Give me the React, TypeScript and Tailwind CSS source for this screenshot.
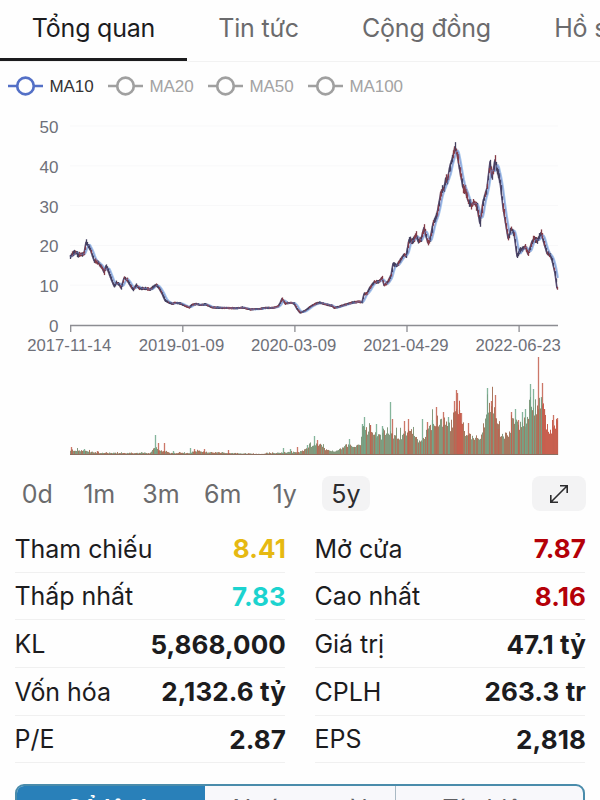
const tabs = [
  { label: "Tổng quan", width: "w-[187px]" },
  { label: "Tin tức", width: "w-[143px]" },
  { label: "Cộng đồng", width: "w-[193px]" },
  { label: "Hồ sơ", width: "w-[130px]" },
]

const legend = ["MA10", "MA20", "MA50", "MA100"]

const ranges = ["0d", "1m", "3m", "6m", "1y", "5y"]

const stats = [
  [
    { label: "Tham chiếu", value: "8.41", color: "text-[#e6b912]" },
    { label: "Thấp nhất", value: "7.83", color: "text-[#1cd3cf]" },
    { label: "KL", value: "5,868,000", color: "text-[#1c1c1e]" },
    { label: "Vốn hóa", value: "2,132.6 tỷ", color: "text-[#1c1c1e]" },
    { label: "P/E", value: "2.87", color: "text-[#1c1c1e]" },
  ],
  [
    { label: "Mở cửa", value: "7.87", color: "text-[#b40008]" },
    { label: "Cao nhất", value: "8.16", color: "text-[#b40008]" },
    { label: "Giá trị", value: "47.1 tỷ", color: "text-[#1c1c1e]" },
    { label: "CPLH", value: "263.3 tr", color: "text-[#1c1c1e]" },
    { label: "EPS", value: "2,818", color: "text-[#1c1c1e]" },
  ],
]

// [x, price]
const prices: number[][] = [
  [70, 17.2], [73, 18], [75, 18.4], [78, 17.7], [81, 17.8], [84, 18], [86, 20.8], [89, 19.5], [91, 18.5], [94, 16.2],
  [98, 15.6], [102, 14.4], [104, 13.2], [106, 14.9], [109, 13], [112, 11], [114, 9.8], [116, 10.6], [119, 10.2], [121, 9.3],
  [124, 11.8], [127, 11.3], [130, 10], [133, 8.9], [136, 10], [139, 9.2], [143, 9.2], [150, 8.9], [153, 9.6], [156, 10.1],
  [159, 9.2], [162, 7.9], [165, 6.2], [168, 5.7], [172, 5.3], [175, 5.6], [180, 5.4], [185, 4.8], [189, 4.4], [192, 5.1],
  [196, 5.3], [200, 5], [205, 5.2], [212, 4.4], [225, 4.3], [235, 4.2], [242, 4.4], [250, 3.9], [258, 4], [265, 4.3],
  [273, 4.3], [278, 4.7], [280, 5.5], [282, 6.6], [285, 5.4], [290, 5.6], [294, 5.4], [297, 4], [300, 3.1], [305, 3.6],
  [310, 4.6], [315, 5.3], [319, 5.6], [325, 5.2], [332, 4.8], [334, 4.3], [340, 4.7], [350, 5.5], [358, 5.9], [362, 5.7],
  [364, 7.8], [367, 8], [370, 9.5], [374, 10.8], [379, 11], [382, 11.9], [384, 10], [388, 11], [391, 12.5], [393, 15.4],
  [396, 14.8], [400, 16.3], [404, 17.7], [406, 17.3], [409, 21.4], [412, 20.9], [416, 22.8], [418, 21], [421, 21.6],
  [424, 24.5], [426, 22.2], [428, 20.6], [430, 21.6], [433, 25.5], [437, 28], [441, 33.5], [444, 34.5], [446, 37], [447, 36],
  [450, 40], [453, 42.5], [455, 44.8], [457, 43], [460, 38.5], [463, 34.5], [465, 34], [468, 31.2], [471, 30], [474, 31],
  [477, 29.5], [480, 25.5], [483, 31], [487, 34.5], [490, 41], [492, 37], [495, 41.5], [497, 39], [500, 36], [503, 29.5],
  [505, 26.5], [508, 21.8], [511, 24.2], [514, 23], [517, 17.3], [520, 18.8], [525, 19.8], [528, 17.8], [532, 21], [534, 21.8],
  [537, 21], [541, 23.2], [544, 20.5], [547, 18], [550, 17.5], [552, 16.3], [555, 13], [557, 9.2], [558, 8],
]

// [x, height] of the typical daily volume
const volumeBase: number[][] = [
  [70, 5], [85, 4], [100, 2], [150, 2], [153, 7], [160, 5], [170, 2], [190, 2], [194, 4], [205, 3], [260, 1], [272, 2],
  [300, 3], [311, 9], [320, 11], [326, 5], [336, 4], [348, 10], [360, 9], [362, 26], [380, 19], [390, 22], [398, 18],
  [408, 23], [420, 13], [430, 28], [440, 36], [450, 28], [456, 46], [462, 34], [466, 19], [480, 18], [485, 34], [490, 52],
  [495, 45], [500, 20], [508, 20], [512, 34], [518, 30], [525, 34], [530, 52], [536, 46], [541, 58], [546, 28], [550, 24], [558, 34],
]

// [x, height, rising]
const volumePeaks: number[][] = [
  [71, 8, 0], [84, 6, 1], [97, 4, 0], [155, 20, 1], [158, 12, 0], [164, 12, 0], [173, 4, 1], [190, 7, 1], [194, 6, 0],
  [204, 6, 0], [228, 5, 0], [283, 7, 1], [290, 6, 1], [297, 8, 0], [307, 10, 1], [314, 19, 1], [317, 15, 0], [349, 16, 1],
  [362, 31, 1], [364, 38, 1], [370, 30, 0], [376, 31, 1], [382, 29, 1], [390, 53, 1], [392, 36, 0], [404, 34, 0], [408, 36, 0],
  [422, 36, 1], [427, 33, 0], [432, 35, 1], [436, 48, 0], [443, 43, 0], [448, 38, 1], [454, 54, 0], [456, 65, 0], [457, 62, 0],
  [459, 45, 0], [461, 42, 0], [468, 32, 0], [487, 67, 1], [491, 54, 0], [495, 60, 0], [498, 26, 0], [511, 43, 0], [515, 46, 1],
  [518, 35, 0], [522, 43, 1], [525, 46, 1], [530, 71, 1], [533, 66, 1], [538, 98, 0], [541, 58, 1], [542, 72, 0], [544, 46, 0],
  [553, 40, 0], [557, 37, 0],
]

const axisY = 325
const volumeY = 455
const unit = 3.98

function lerp(points: number[][], x: number) {
  for (let i = 1; i < points.length; i++) {
    if (x <= points[i][0]) {
      const [x0, y0] = points[i - 1]
      const [x1, y1] = points[i]
      return y0 + ((x - x0) / (x1 - x0)) * (y1 - y0)
    }
  }
  return points[points.length - 1][1]
}

function noise(n: number) {
  const v = Math.sin(n * 12.9898 + 4.1) * 43758.5453
  return v - Math.floor(v)
}

const candles = Array.from({ length: 488 }, (_, i) => {
  const x = 70 + i
  const price = lerp(prices, x)
  const spread = 0.7 + Math.min(price, 34) * 0.09 * (0.4 + noise(i))
  const y = axisY - price * unit + (noise(i + 900) - 0.5) * price * 0.08
  return { x, top: y - spread, bottom: y + spread, up: noise(i + 300) > 0.5 }
})

const priceLine = candles.map(({ x }) => `${x},${(axisY - lerp(prices, x) * unit).toFixed(1)}`).join(" ")

const ma10 = candles
  .map(({ x }) => {
    const avg = [0, 1, 2, 3].reduce((sum, d) => sum + lerp(prices, Math.max(70, x - d)), 0) / 4
    return `${x},${(axisY - avg * unit).toFixed(1)}`
  })
  .join(" ")

const volumes = Array.from({ length: 488 }, (_, i) => {
  const x = 70 + i
  // single sessions stand out above the usual level
  const burst = noise(i + 210) > 0.85 ? 1.35 : 1
  return { x, h: Math.max(1, lerp(volumeBase, x) * (0.8 + noise(i + 50) * 0.35) * burst), up: noise(i + 77) > 0.5 }
})

function volumeColor(x: number, up: boolean) {
  if ((x > 456 && x < 463) || x > 541) return "#c9604f"
  return up ? "#83997d" : "#a8775f"
}

function Chart() {
  return (
    <svg width="600" height="362" viewBox="0 106 600 362" className="block font-['Liberation_Sans',sans-serif]">
      {[0, 10, 20, 30, 40, 50].map((v) => (
        <g key={v}>
          {v > 0 && <path d={`M70 ${axisY - v * unit}H558`} stroke="#f8f8f9" />}
          <text x="58.5" y={axisY - v * unit + 7} textAnchor="end" fontSize="17" fill="#6e7079">
            {v}
          </text>
        </g>
      ))}
      <path d="M70 325.5H558" stroke="#8c8d92" strokeWidth="1.3" />
      {["2017-11-14", "2019-01-09", "2020-03-09", "2021-04-29", "2022-06-23"].map((d, i) => (
        <g key={d}>
          <path d={`M${70.7 + i * 112.1} 325V332`} stroke="#8c8d92" strokeWidth="1.3" />
          <text x={69.3 + i * 112.2} y="351" textAnchor="middle" fontSize="16.7" fill="#6e7079">
            {d}
          </text>
        </g>
      ))}

      {/* Price */}
      <polyline points={ma10} fill="none" stroke="#a3c3ea" strokeWidth="2" strokeLinejoin="round" transform="translate(1 0)" />
      <polyline points={priceLine} fill="none" stroke="#55496f" strokeWidth="1.6" strokeLinejoin="round" />
      {candles.map((c) => (
        <path key={c.x} d={`M${c.x + 0.5} ${c.top}V${c.bottom}`} stroke={c.up ? "#44405f" : "#843c48"} strokeWidth="1.3" />
      ))}
      <polyline points={ma10} fill="none" stroke="#7888cc" strokeWidth="1" strokeLinejoin="round" opacity="0.65" transform="translate(0.5 0)" />

      {/* Volume */}
      {volumes.map((v) => (
        <path key={v.x} d={`M${v.x + 0.5} ${volumeY}V${volumeY - v.h}`} stroke={volumeColor(v.x, v.up)} />
      ))}
      {volumePeaks.map(([x, h, up]) => (
        <path key={x} d={`M${x + 0.5} ${volumeY}V${volumeY - h}`} stroke={up ? "#6fa98a" : "#c4604f"} strokeWidth="1.3" opacity="0.85" />
      ))}
      <path d="M70 454.5H558" stroke="#8b6e60" />
    </svg>
  )
}

export default function App() {
  return (
    <div className="w-[600px] h-[800px] overflow-hidden bg-[#fefefe] font-['Inter',sans-serif] text-[#1c1c1e]">
      {/* Tabs */}
      <div className="flex h-[62px] border-b border-[#f2f2f2]">
        {tabs.map((tab, i) => (
          <div
            key={tab.label}
            className={`h-[61px] shrink-0 pt-2 flex justify-center text-[25px] leading-10 tracking-[-0.2px] whitespace-nowrap ${tab.width} ${
              i === 0 ? "border-b-[3px] border-[#1c1c1e]" : "text-[#6b6b6d]"
            }`}
          >
            {tab.label}
          </div>
        ))}
      </div>

      {/* Moving averages */}
      <div className="flex h-11 pl-[7.5px] pt-3 font-['Liberation_Sans',sans-serif] text-[17px] leading-6">
        {legend.map((name, i) => (
          <div key={name} className={`w-[100px] shrink-0 flex gap-[7px] ${i === 0 ? "text-[#333333]" : "text-[#a3a3a3]"}`}>
            <svg width="35" height="24" viewBox="0 0 35 24" fill="none" stroke={i === 0 ? "#5470c6" : "#a0a0a0"} strokeWidth="2.7">
              <path d="M0 12H9M26 12H35" />
              <circle cx="17.5" cy="12" r="8.3" />
            </svg>
            <span className="pt-px tracking-[-0.1px]">{name}</span>
          </div>
        ))}
      </div>

      <Chart />

      {/* Time range */}
      <div className="flex justify-between pl-[6px] pr-[14px] pt-2">
        <div className="grid grid-cols-[repeat(6,61.8px)] text-[25px] leading-[36px] text-[#6b6b6d]">
          {ranges.map((range) => (
            <div key={range} className="flex h-[35px] justify-center">
              <span className={range === "5y" ? "w-12 rounded-lg bg-[#f3f3f4] text-center text-[#2c2c2e]" : "pl-px"}>{range}</span>
            </div>
          ))}
        </div>
        <div className="w-[54px] h-[35px] rounded-lg bg-[#f3f3f4] flex items-center justify-center">
          <svg width="20" height="20" viewBox="0 0 20 20" fill="none" stroke="#2c2c2e" strokeWidth="1.6">
            <path d="M1.8 18.2L18.2 1.8M11 1.8H18.2V9M1.8 11V18.2H9" />
          </svg>
        </div>
      </div>

      {/* Stats */}
      <div className="grid grid-cols-2 gap-x-[30px] px-[15px] pt-[14px]">
        {stats.map((column, i) => (
          <div key={i}>
            {column.map((row) => (
              <div key={row.label} className="h-[47.7px] pt-[2px] border-b border-[#f0f0f0] flex items-center justify-between whitespace-nowrap">
                <span className="-ml-[0.5px] text-[25px] tracking-[-0.05px]">{row.label}</span>
                <span className={`-mr-px text-[26px] leading-9 font-bold tracking-[0.1px] ${row.color}`}>{row.value}</span>
              </div>
            ))}
          </div>
        ))}
      </div>

      {/* Order book switch */}
      <div className="mx-[15px] mt-[21px] h-[50px] grid grid-cols-[188px_190px_188px] overflow-hidden rounded-[9px] border-2 border-[#4a8cab] bg-[#f8f8fb] text-center text-[25px] leading-[46px] text-[#5f5f63]">
        <div className="bg-[#2980b9] font-semibold text-white">Sổ lệnh</div>
        <div>Nước ngoài</div>
        <div className="border-l border-[#a9b9c4]">Tín hiệu</div>
      </div>
    </div>
  )
}
